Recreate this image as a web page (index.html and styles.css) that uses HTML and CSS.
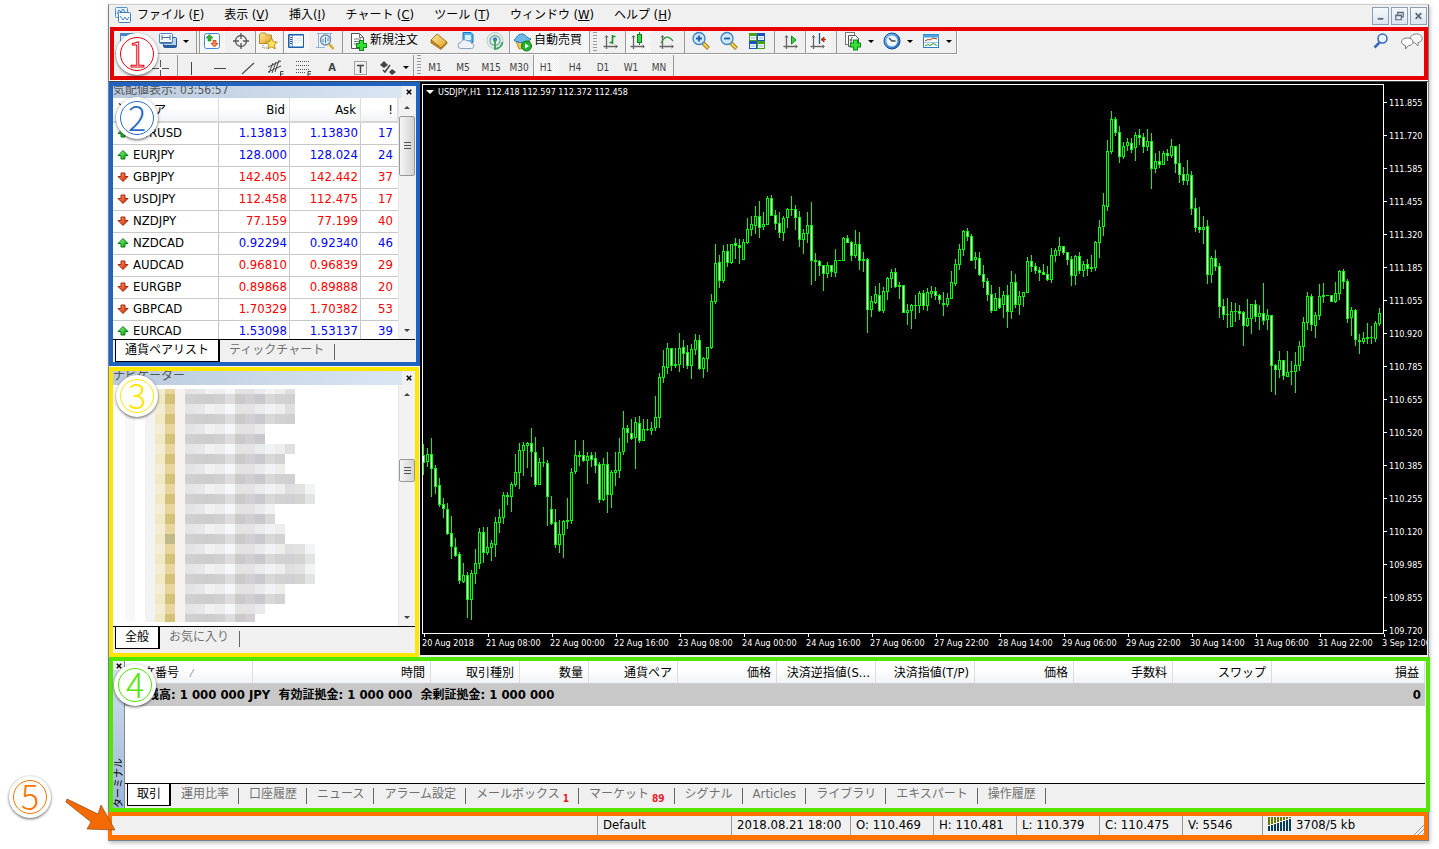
FILE: index.html
```html
<!DOCTYPE html>
<html lang="ja">
<head>
<meta charset="utf-8">
<title>USDJPY,H1</title>
<link rel="stylesheet" href="styles.css">
</head>
<body>
<svg class="defs" aria-hidden="true">
  <defs>
    <linearGradient id="gUp" x2="1" y2="1"><stop offset="0" stop-color="#8f8"/><stop offset="1" stop-color="#090"/></linearGradient>
    <linearGradient id="gDown" x2="1" y2="1"><stop offset="0" stop-color="#ff9a6a"/><stop offset="1" stop-color="#c81e00"/></linearGradient>
    <linearGradient id="gGold" x2="1" y2="1"><stop offset="0" stop-color="#ffe9a0"/><stop offset="1" stop-color="#e0a020"/></linearGradient>
    <linearGradient id="gBlue" x2="1" y2="1"><stop offset="0" stop-color="#8fc8ff"/><stop offset="1" stop-color="#1560b8"/></linearGradient>
  </defs>
  <symbol id="up" viewBox="0 0 12 12"><path d="M6 1.500 11 6.500H8V10H4V6.500H1z" fill="url(#gUp)" stroke="#0a7a14"/></symbol>
  <symbol id="down" viewBox="0 0 12 12"><path d="M6 10.500 11 5.500H8V2H4V5.500H1z" fill="url(#gDown)" stroke="#a02a10"/></symbol>
  <symbol id="app" viewBox="0 0 20 20"><rect x="2.500" y="2.500" width="12" height="10" rx="1" fill="#e6f1fc" stroke="#5a93cc"/><rect x="5.500" y="7.500" width="12" height="10" rx="1" fill="#fff" stroke="#3d7fc0"/><path d="M4 9l2-4 2 2 2-3 2 3M7 11l3 4 2-3 2 3 2-3" fill="none" stroke="#3d7fc0"/></symbol>
  <symbol id="newchart" viewBox="0 0 20 20"><rect x="1.500" y="2.500" width="14" height="11" fill="#eaf3fc" stroke="#4a86c5"/><path d="M2 4h13" stroke="#4a86c5" stroke-width="2"/><path d="M12 8v9M7.500 12.500h9" stroke="#18a818" stroke-width="3"/></symbol>
  <symbol id="profiles" viewBox="0 0 20 20"><rect x="5.500" y="6.500" width="13" height="10" rx="1" fill="#b9d5f2" stroke="#2a5c9c"/><path d="M6 15h12" stroke="#2a5c9c" stroke-width="2"/><rect x="1.500" y="2.500" width="13" height="10" rx="1" fill="#f2f8ff" stroke="#4a86c5"/><path d="M4 4v5M12 4v5M4 6.500h8M2 11.500h12" stroke="#4a6f94" fill="none"/></symbol>
  <symbol id="market" viewBox="0 0 20 20"><rect x="2.500" y="2.500" width="15" height="15" rx="2" fill="#fff" stroke="#3d8bd8"/><path d="M7.500 3.500 11 7H9v3H6V7H4z" fill="#2eb52e" stroke="#0b8213" stroke-width=".6"/><path d="M12.500 16 16 12.500h-2v-3h-3v3H9z" fill="#f28a5a" stroke="#c23a10" stroke-width=".8"/></symbol>
  <symbol id="cross" viewBox="0 0 20 20"><circle cx="10" cy="10" r="5.500" fill="none" stroke="#555" stroke-width="1.300"/><path d="M10 2v6M10 12v6M2 10h6M12 10h6" stroke="#555" stroke-width="1.300"/></symbol>
  <symbol id="navi" viewBox="0 0 20 20"><path d="M1.500 12.500v-9l2-1.500h4l1 2h5v8.500z" fill="url(#gGold)" stroke="#b98a1c"/><path d="M5 14v3h4" stroke="#777" stroke-dasharray="1 1" fill="none"/><path d="m13.500 7 1.800 3.700 4 .4-3 2.700.9 4-3.700-2-3.700 2 .9-4-3-2.700 4-.4z" fill="#ffe45c" stroke="#b98a1c"/></symbol>
  <symbol id="term" viewBox="0 0 20 20"><rect x="2" y="3" width="16" height="14" rx="1" fill="#1c5fae"/><rect x="3.500" y="4.500" width="3" height="11" fill="#dcebfb"/><rect x="7" y="4.500" width="10" height="11" fill="#fff"/><path d="M4 6.500h2" stroke="#d33"/><path d="M4 8.500h2M4 10.500h2M4 12.500h2" stroke="#456"/><path d="M8 7.500h8M8 9.500h8M8 11.500h8" stroke="#e0eaf5"/></symbol>
  <symbol id="tester" viewBox="0 0 20 20"><path d="M2 2.500h15M3.500 2v15M15.500 2v7M1 16.500h9" stroke="#8bb3dd" fill="none"/><circle cx="10.500" cy="9" r="5" fill="#dcecfa" stroke="#6888a8" stroke-width="1.300"/><path d="M8 11V8M10.500 12V6M13 10V7" stroke="#4a7cb5"/><path d="m14 13 4.500 5" stroke="#d8a828" stroke-width="2.500"/></symbol>
  <symbol id="order" viewBox="0 0 20 20"><path d="M2.500 1.500h8l4 4v11h-12z" fill="#fff" stroke="#555"/><path d="M10.500 1.500v4h4M5 7h7M5 9.500h7M5 12h5" stroke="#777" fill="none"/><path d="M12.500 8v11M7 13.500h11" stroke="#0a8a1a" stroke-width="5"/><path d="M12.500 9v9M8 13.500h9" stroke="#35e035" stroke-width="3"/></symbol>
  <symbol id="book" viewBox="0 0 20 20"><path d="m8 3 10 8-6 6L2 9z" fill="url(#gGold)" stroke="#a8741a"/><path d="M2 9v3l10 6.500 6-6V11l-6 6z" fill="#c98a1e" stroke="#8a5a10" stroke-width=".6"/></symbol>
  <symbol id="cloud" viewBox="0 0 20 20"><path d="M6 1.500h8l2 2v8H6z" fill="#49b2f2" stroke="#1c78bd"/><path d="M8 4h6v5H8z" fill="#d7f0ff"/><path d="M4 17.500a3 3 0 0 1 0-6c1-3 4-3.500 6-1.500 3-1 4 1 4.500 2.500 3 0 3 5 0 5z" fill="#eef3fa" stroke="#8aa2bd"/></symbol>
  <symbol id="signal" viewBox="0 0 20 20"><circle cx="10" cy="9.500" r="8" fill="#e6efee" stroke="#b5c9c4"/><circle cx="10" cy="9.500" r="5" fill="none" stroke="#7fb0a0" stroke-width="1.500"/><circle cx="10" cy="8.500" r="2.200" fill="#3b81c4"/><path d="M10 9v9c4-.5 7-3 7.500-7" fill="none" stroke="#3aa05c" stroke-width="1.800"/></symbol>
  <symbol id="auto" viewBox="0 0 20 20"><path d="M3 9h14l-3 7-8 1z" fill="#f3cb4c" stroke="#b88a18"/><path d="M1 8c3-2 3-6 8-6 4 0 4 4 9 5-3 4-13 5-17 1z" fill="#6fb9e8" stroke="#2878b5"/><circle cx="13.500" cy="14" r="5" fill="#22b52e" stroke="#0b7a17"/><path d="m12 11.500 4 2.500-4 2.500z" fill="#fff"/></symbol>
  <symbol id="axes" viewBox="0 0 20 20"><path d="M5.500 5v13M2.500 15.500H16" fill="none" stroke="#666" stroke-width="1.300"/><path d="M4 6.500 5.500 4.500 7 6.500M14.500 14l2 1.500-2 1.500" fill="none" stroke="#666"/></symbol>
  <symbol id="bars" viewBox="0 0 20 20"><use href="#axes"/><path d="M11.500 4v9M11.500 5.500h3M8.500 11.500h3" stroke="#18902a" stroke-width="1.600"/></symbol>
  <symbol id="candle" viewBox="0 0 20 20"><use href="#axes"/><path d="M11.500 1v13" stroke="#18902a"/><rect x="9.500" y="3.500" width="4" height="8" fill="#2bdc3b" stroke="#0f7d20"/></symbol>
  <symbol id="line" viewBox="0 0 20 20"><use href="#axes"/><path d="M4 12c4-7 7-8 12-2" stroke="#2b9a3a" stroke-width="1.300" fill="none"/></symbol>
  <symbol id="zin" viewBox="0 0 20 20"><path d="m12 12 5.500 5.500" stroke="#a8841c" stroke-width="4"/><path d="m12 12 5 5" stroke="#f2d057" stroke-width="2"/><circle cx="8" cy="7.500" r="6" fill="#cfe6fa" stroke="#3a82c4" stroke-width="1.300"/><path d="M8 4.500v6M5 7.500h6" stroke="#1c5ea8" stroke-width="1.800"/></symbol>
  <symbol id="zout" viewBox="0 0 20 20"><path d="m12 12 5.500 5.500" stroke="#a8841c" stroke-width="4"/><path d="m12 12 5 5" stroke="#f2d057" stroke-width="2"/><circle cx="8" cy="7.500" r="6" fill="#cfe6fa" stroke="#3a82c4" stroke-width="1.300"/><path d="M5 7.500h6" stroke="#1c5ea8" stroke-width="1.800"/></symbol>
  <symbol id="tile" viewBox="0 0 20 20"><path d="M2 2h8v8H2zM10 10h8v8h-8z" fill="#48a018"/><path d="M10 2h8v8h-8zM2 10h8v8H2z" fill="#1c52c0"/><path d="M3 5h6v4H3zM11 5h6v4h-6zM3 13h6v4H3zM11 13h6v4h-6z" fill="#eaf4ff"/><path d="M4 7h4M12 7h4M4 15h4M12 15h4" stroke="#9bc"/></symbol>
  <symbol id="scroll" viewBox="0 0 20 20"><use href="#axes"/><path d="m10.500 5 4.500 4-4.500 4z" fill="#3bd64b" stroke="#138022"/></symbol>
  <symbol id="shift" viewBox="0 0 20 20"><use href="#axes"/><path d="M11.500 2v11" stroke="#1c5ea8" stroke-width="1.400"/><path d="M18 8.500h-4M16 6l-3 2.500 3 2.500z" stroke="#b52c0c" fill="#d8481c"/></symbol>
  <symbol id="indi" viewBox="0 0 20 20"><rect x="2.500" y="1.500" width="9" height="12" fill="#fff" stroke="#777"/><path d="M5.500 4.500h7l3 3v8h-10z" fill="#fff" stroke="#555"/><path d="M10 6.500c-2-1-2 1-2 6M6.500 9h3" stroke="#555" fill="none"/><path d="M12.500 8.500v11M7 14h11" stroke="#0a8a1a" stroke-width="5"/><path d="M12.500 9.500v9M8 14h9" stroke="#35e035" stroke-width="3"/></symbol>
  <symbol id="clock" viewBox="0 0 20 20"><circle cx="10" cy="10" r="8" fill="url(#gBlue)" stroke="#0f4a95"/><circle cx="10" cy="10" r="5.500" fill="#eef6fd"/><path d="M7 7l3 3h3.500" stroke="#444" stroke-width="1.300" fill="none"/></symbol>
  <symbol id="templ" viewBox="0 0 20 20"><rect x="2.500" y="3.500" width="15" height="13" fill="#fff" stroke="#2f7fc8"/><path d="M2 5h16" stroke="#4aa0e0" stroke-width="3"/><path d="M3 11.500h14" stroke="#9cc4e4"/><path d="m4 10 3-1.500 2 .5 3-2 4 1" stroke="#a83a10" fill="none"/><path d="m4 15 3-1.500 2 1 3-2 4 2" stroke="#1a9a2a" fill="none"/></symbol>
  <symbol id="find" viewBox="0 0 20 20"><path d="m8.500 11.500-5 5" stroke="#3568c0" stroke-width="2.500"/><circle cx="11.500" cy="7.500" r="4.500" fill="#edf4fd" stroke="#3568c0" stroke-width="1.500"/></symbol>
  <symbol id="chat" viewBox="0 0 24 20"><path d="M15 3c9-1 9 8 3 8.500V15l-3-3c-6 0-7-8 0-9z" fill="#f5f5f5" stroke="#888"/><path d="M7.500 7c-8 0-7 7-2 7.500V18l3-3.500c6 0 6-7.500-1-7.500z" fill="#fff" stroke="#777"/></symbol>
  <symbol id="cursor" viewBox="0 0 20 20"><path d="M6 3v12l3-3 2 5 2-1-2-4h4z" fill="#555"/></symbol>
  <symbol id="plus" viewBox="0 0 20 20"><path d="M10.500 2v7M10.500 12v6M2 10.500h7M12 10.500h7" stroke="#555"/></symbol>
  <symbol id="vl" viewBox="0 0 20 20"><path d="M9.500 4v13" stroke="#444"/></symbol>
  <symbol id="hl" viewBox="0 0 20 20"><path d="M4 10.500h12" stroke="#444"/></symbol>
  <symbol id="tl" viewBox="0 0 20 20"><path d="M4 16 16 5" stroke="#555" stroke-width="1.300"/></symbol>
  <symbol id="chan" viewBox="0 0 20 20"><path d="M2 9 15 3M2 14 15 8M3 15l4-10M6 15l4-11M9 14l4-12" stroke="#444" fill="none"/><path d="M17.500 13.500h-3v5h3M14.500 16h3" stroke="#444" fill="none"/></symbol>
  <symbol id="fibo" viewBox="0 0 20 20"><path d="M2 3.500h14M2 7.500h14M2 11.500h14M2 14.500h10" stroke="#555" stroke-dasharray="1 1"/><path d="M17 13.500h-3V19M14 16h3" stroke="#444" fill="none"/></symbol>
  <symbol id="tbox" viewBox="0 0 20 20"><path d="M4.500 3.500h12v13h-12z" fill="none" stroke="#555" stroke-dasharray="1 1"/><path d="M7 7.500h7M10.500 7v8" stroke="#444" stroke-width="1.500"/></symbol>
  <symbol id="shapes" viewBox="0 0 20 20"><path d="m6 3 4 4-4 3-4-3zM14 11l4 3-4 3-3-3z" fill="#444"/><path d="m5 12 2 2 5-7" stroke="#444" stroke-width="1.500" fill="none"/></symbol>
</svg>

<div class="window">
  <nav class="menubar">
    <svg class="ico"><use href="#app"/></svg>
    <ul class="menus">
      <li><button>ファイル <span class="lat">(<u>F</u>)</span></button></li>
      <li><button>表示 <span class="lat">(<u>V</u>)</span></button></li>
      <li><button>挿入<span class="lat">(<u>I</u>)</span></button></li>
      <li><button>チャート <span class="lat">(<u>C</u>)</span></button></li>
      <li><button>ツール <span class="lat">(<u>T</u>)</span></button></li>
      <li><button>ウィンドウ <span class="lat">(<u>W</u>)</span></button></li>
      <li><button>ヘルプ <span class="lat">(<u>H</u>)</span></button></li>
    </ul>
    <div class="winbtns">
      <button aria-label="最小化"><svg viewBox="0 0 16 16"><path d="M5 11h6" stroke="#5c6c7c" stroke-width="2"/></svg></button>
      <button aria-label="元に戻す"><svg viewBox="0 0 16 16"><path d="M6 6V4h6v5h-2M4 7h6v5H4zM4 7.500h6M6 4.500h6" fill="none" stroke="#5c6c7c" stroke-width="1.300"/></svg></button>
      <button aria-label="閉じる"><svg viewBox="0 0 16 16"><path d="m5 5 6 6M11 5l-6 6" stroke="#5c6c7c" stroke-width="2"/></svg></button>
    </div>
  </nav>

  <section class="toolbars framed red">
    <div class="toolbar">
      <div class="band">
        <button class="tool dd" aria-label="新規チャート"><svg class="ico"><use href="#newchart"/></svg></button>
        <button class="tool dd" aria-label="プロファイル"><svg class="ico"><use href="#profiles"/></svg></button>
        <i class="sep"></i>
        <button class="tool on" aria-label="気配値表示"><svg class="ico"><use href="#market"/></svg></button>
        <button class="tool" aria-label="データウィンドウ"><svg class="ico"><use href="#cross"/></svg></button>
        <button class="tool on" aria-label="ナビゲーター"><svg class="ico"><use href="#navi"/></svg></button>
        <button class="tool on" aria-label="ターミナル"><svg class="ico"><use href="#term"/></svg></button>
        <button class="tool" aria-label="ストラテジーテスター"><svg class="ico"><use href="#tester"/></svg></button>
        <i class="sep"></i>
        <button class="tool wide"><svg class="ico"><use href="#order"/></svg><span>新規注文</span></button>
        <button class="tool" aria-label="メタエディター"><svg class="ico"><use href="#book"/></svg></button>
        <button class="tool" aria-label="クラウド"><svg class="ico"><use href="#cloud"/></svg></button>
        <button class="tool" aria-label="シグナル"><svg class="ico"><use href="#signal"/></svg></button>
        <button class="tool wide on"><svg class="ico"><use href="#auto"/></svg><span>自動売買</span></button>
        <i class="grip"></i>
        <button class="tool" aria-label="バーチャート"><svg class="ico"><use href="#bars"/></svg></button>
        <button class="tool on" aria-label="ローソク足"><svg class="ico"><use href="#candle"/></svg></button>
        <button class="tool" aria-label="ラインチャート"><svg class="ico"><use href="#line"/></svg></button>
        <i class="sep"></i>
        <button class="tool" aria-label="拡大"><svg class="ico"><use href="#zin"/></svg></button>
        <button class="tool" aria-label="縮小"><svg class="ico"><use href="#zout"/></svg></button>
        <button class="tool" aria-label="整列"><svg class="ico"><use href="#tile"/></svg></button>
        <i class="sep"></i>
        <button class="tool" aria-label="自動スクロール"><svg class="ico"><use href="#scroll"/></svg></button>
        <button class="tool on" aria-label="チャートシフト"><svg class="ico"><use href="#shift"/></svg></button>
        <i class="sep"></i>
        <button class="tool dd" aria-label="インディケータ"><svg class="ico"><use href="#indi"/></svg></button>
        <button class="tool dd" aria-label="時間足"><svg class="ico"><use href="#clock"/></svg></button>
        <button class="tool dd" aria-label="定型チャート"><svg class="ico"><use href="#templ"/></svg></button>
      </div>
      <span class="right">
        <button class="tool" aria-label="検索"><svg class="ico"><use href="#find"/></svg></button>
        <button class="tool" aria-label="チャット"><svg class="ico chat"><use href="#chat"/></svg></button>
      </span>
    </div>
    <div class="toolbar second">
      <button class="tool" aria-label="カーソル"><svg class="ico"><use href="#cursor"/></svg></button>
      <button class="tool" aria-label="十字カーソル"><svg class="ico"><use href="#plus"/></svg></button>
      <i class="sep"></i>
      <button class="tool" aria-label="垂直線"><svg class="ico"><use href="#vl"/></svg></button>
      <button class="tool" aria-label="水平線"><svg class="ico"><use href="#hl"/></svg></button>
      <button class="tool" aria-label="トレンドライン"><svg class="ico"><use href="#tl"/></svg></button>
      <button class="tool" aria-label="チャネル"><svg class="ico"><use href="#chan"/></svg></button>
      <button class="tool" aria-label="フィボナッチ"><svg class="ico"><use href="#fibo"/></svg></button>
      <button class="tool letter">A</button>
      <button class="tool" aria-label="ラベル"><svg class="ico"><use href="#tbox"/></svg></button>
      <button class="tool dd" aria-label="図形"><svg class="ico"><use href="#shapes"/></svg></button>
      <i class="grip"></i>
      <button class="tool tf">M1</button><button class="tool tf">M5</button><button class="tool tf">M15</button><button class="tool tf">M30</button><button class="tool tf on">H1</button><button class="tool tf">H4</button><button class="tool tf">D1</button><button class="tool tf">W1</button><button class="tool tf">MN</button>
      <i class="end"></i>
    </div>
    <b class="badge b1">1</b>
  </section>

  <main class="work">
    <div class="side">
      <section class="panel framed blue">
        <h2 class="caption"><span>気配値表示: 03:56:57</span><button aria-label="閉じる"><svg viewBox="0 0 8 8"><path d="m1 1 6 6M7 1 1 7" stroke="#000" stroke-width="2"/></svg></button></h2>
        <div class="body">
          <div class="list">
            <table class="quotes">
              <colgroup><col><col class="c2"><col class="c3"><col class="c4"></colgroup>
              <thead><tr><th>通貨ペア</th><th>Bid</th><th>Ask</th><th>!</th></tr></thead>
              <tbody id="quotes"></tbody>
            </table>
          </div>
          <div class="scroll"><i class="arr u"></i><i class="thumb tall"></i><i class="arr d"></i></div>
        </div>
        <div class="tabs"><button class="act">通貨ペアリスト</button><button>ティックチャート</button></div>
        <b class="badge b2">2</b>
      </section>
      <section class="panel framed yellow">
        <h2 class="caption"><span>ナビゲーター</span><button aria-label="閉じる"><svg viewBox="0 0 8 8"><path d="m1 1 6 6M7 1 1 7" stroke="#000" stroke-width="2"/></svg></button></h2>
        <div class="body">
          <div class="list"><svg id="mosaic" class="mosaic" viewBox="0 0 285 241" width="285" height="241" shape-rendering="crispEdges"></svg></div>
          <div class="scroll"><i class="arr u"></i><i class="thumb mid"></i><i class="arr d"></i></div>
        </div>
        <div class="tabs"><button class="act">全般</button><button>お気に入り</button></div>
        <b class="badge b3">3</b>
      </section>
    </div>
    <section class="chart">
      <div class="plot">
        <svg id="candles" viewBox="422 84 962 550" preserveAspectRatio="none" shape-rendering="crispEdges"></svg>
        <p class="title">USDJPY,H1&nbsp; 112.418 112.597 112.372 112.458</p>
      </div>
      <ol class="prices" id="prices"></ol>
      <ol class="times" id="times"></ol>
    </section>
  </main>

  <section class="terminal framed green">
    <div class="strip"><button aria-label="閉じる"><svg viewBox="0 0 8 8"><path d="m1 1 6 6M7 1 1 7" stroke="#000" stroke-width="2"/></svg></button><h2>ターミナル</h2></div>
    <div class="tmain">
      <table class="trades">
        <colgroup><col class="w127"><col class="w178"><col class="w89"><col class="w69"><col class="w89"><col class="w99"><col class="w99"><col class="w99"><col class="w99"><col class="w99"><col class="w99"><col></colgroup>
        <thead><tr><th class="first">注文番号<small>⁄</small></th><th>時間</th><th>取引種別</th><th>数量</th><th>通貨ペア</th><th>価格</th><th>決済逆指値<span class="lat">(S...</span></th><th>決済指値<span class="lat">(T/P)</span></th><th>価格</th><th>手数料</th><th>スワップ</th><th>損益</th></tr></thead>
        <tbody><tr><td colspan="11">残高<span class="lat">: 1 000 000 JPY&nbsp; </span>有効証拠金<span class="lat">: 1 000 000&nbsp; </span>余剰証拠金<span class="lat">: 1 000 000</span></td><td class="num"><span class="lat">0</span></td></tr></tbody>
      </table>
      <div class="tabs">
        <button class="act">取引</button><button>運用比率</button><button>口座履歴</button><button>ニュース</button><button>アラーム設定</button><button>メールボックス<sub>1</sub></button><button>マーケット<sub>89</sub></button><button>シグナル</button><button><span class="lat">Articles</span></button><button>ライブラリ</button><button>エキスパート</button><button>操作履歴</button>
      </div>
    </div>
    <b class="badge b4">4</b>
  </section>

  <footer class="status framed orange">
    <span class="s0"></span><span class="s1">Default</span><span class="s2">2018.08.21 18:00</span><span class="s3">O: 110.469</span><span class="s3">H: 110.481</span><span class="s3">L: 110.379</span><span class="s3">C: 110.475</span><span class="s4">V: 5546</span><span class="s5"><svg id="net" viewBox="0 0 24 14" width="24" height="14" shape-rendering="crispEdges"></svg>3708/5 kb</span>
    <svg class="size" viewBox="0 0 12 12"><path d="M1 12 12 1M5 12l7-7M9 12l3-3" stroke="#999"/></svg>
    <b class="badge b5">5</b>
    <svg class="arrow" viewBox="0 0 52 36"><path d="M2 1 33 16 36 7 50 32 22 31 26 24 1 4z" fill="#f56a00" stroke="#8a4a18" stroke-width=".7"/></svg>
  </footer>
</div>
<script src="app.js"></script>
</body>
</html>
```
FILE: styles.css
```css
* { box-sizing: border-box; }
body { margin: 0; padding: 4px 10px 8px 108px; background: #fff; color: #000; font-family: "DejaVu Sans Condensed", "Noto Sans CJK JP", sans-serif; font-size: 12px; line-height: 16px; }
button { font: inherit; color: inherit; background: none; border: 0; padding: 0; margin: 0; white-space: nowrap; }
h2, p, ul, ol { margin: 0; padding: 0; list-style: none; font-size: 12px; font-weight: normal; }
.lat { font-size: 13px; line-height: 14px; }
.defs { position: absolute; width: 0; height: 0; }
.ico { width: 20px; height: 20px; flex: none; display: block; }
.ico.chat { width: 24px; }

.window { border: 1px solid #76828e; border-top-color: #ccc; background: #f0f0f0; box-shadow: 1px 2px 4px #0004; }
.framed { position: relative; }
.framed::after { content: ""; position: absolute; inset: 0; border: 4px solid; pointer-events: none; z-index: 2; }
.red::after { border-color: #e60000; left: 1px; }
.blue::after { border-color: #1f62c0; }
.yellow::after { border-color: #ffe600; right: 1px; }
.green::after { border-color: #52e600; right: -2px; }
.orange::after { border-color: #ff7300; left: -1px; border-bottom-width: 5px; }

.badge { position: absolute; z-index: 4; width: 42px; height: 42px; border-radius: 50%; border: 3px solid #fff; background: #fff; box-shadow: 0 1px 3px #0009; font: 300 34px/33px "Noto Sans CJK JP", sans-serif; text-align: center; }
.badge::before { content: ""; position: absolute; inset: 1px; border: 1px solid; border-radius: 50%; }
.b1 { left: 7px; top: 6px; color: #fff; -webkit-text-stroke: 1px #e60012; }
.b1::before { border-color: #e60012; }
.b2 { left: 7px; top: 15px; color: #2b6cc4; }
.b3 { left: 7px; top: 8px; color: #ffe600; }
.b4 { left: 5px; top: 7px; color: #52e600; }
.b5 { left: -100px; top: -36px; color: #ff7300; }
.arrow { position: absolute; z-index: 4; left: -44px; top: -14px; width: 52px; height: 36px; }

.menubar { display: flex; align-items: center; height: 22px; padding: 0 0 2px 4px; }
.menus { display: flex; gap: 20px; margin-left: 4px; }
.winbtns { margin-left: auto; display: flex; gap: 2px; padding: 1px 1px 0 0; }
.winbtns button { width: 17px; height: 18px; border: 1px solid #8aa0b5; background: linear-gradient(#f4f8fc, #dbe6f1); }
.winbtns svg { display: block; width: 15px; height: 16px; }

.toolbars { height: 54px; border-bottom: 1px solid #fff; }
.toolbar { display: flex; align-items: stretch; height: 27px; padding-left: 6px; }
.band { display: flex; padding-top: 2px; border-right: 1px solid #999; border-bottom: 1px solid #999; box-shadow: 1px 1px #fff; }
.toolbar.second { padding: 1px 0 0 9px; height: 26px; }
.tool { width: 28px; display: flex; align-items: center; justify-content: center; flex: none; }
.tool.on { background: repeating-conic-gradient(#fff 0 25%, #eee 0 50%) 0 0 / 2px 2px content-box; box-shadow: inset 1px 0 #999; padding-right: 2px; }
.tool.dd { width: 39px; justify-content: flex-start; padding-left: 4px; gap: 5px; }
.tool.dd::after { content: ""; border: 3px solid transparent; border-top-color: #000; border-bottom: 0; }
.tool.wide { width: 80px; align-items: flex-start; justify-content: flex-start; padding-left: 4px; padding-top: 3px; gap: 1px; }
.tool.wide.on { background-clip: padding-box; }
.tool.letter { color: #444; font-weight: bold; font-size: 11px; }
.tool.tf { color: #444; font-size: 10px; }
.sep { width: 6px; flex: none; background: linear-gradient(#999, #999) 3px 0 / 1px 100% no-repeat; }
.second .sep { width: 4px; }
.grip { width: 8px; flex: none; border-left: 1px solid #999; background: repeating-linear-gradient(#999 0 1px, #f0f0f0 1px 3px) 3px 0 / 4px 100% no-repeat; }
.end { border-left: 1px solid #999; flex: none; }
.right { margin-left: auto; display: flex; padding: 1px 2px 0 0; gap: 3px; }

.work { display: flex; border-top: 1px solid #444; }
.side { width: 311px; flex: none; display: flex; flex-direction: column; gap: 1px; }
.panel { padding: 3px 5px 4px 4px; background: #f0f0f0; }
.yellow { padding-bottom: 8px; padding-top: 4px; }
.caption { display: flex; align-items: center; justify-content: space-between; height: 13px; overflow: hidden; background: linear-gradient(90deg, #b9cade, #dce7f3); color: #555; }
.yellow .caption { height: 14px; }
.caption span { height: 20px; line-height: 16px; }
.caption button { align-self: stretch; width: 13px; background: #f0f0f0; }
.caption svg, .strip svg { width: 6px; height: 6px; display: block; margin: auto; }
.body { display: flex; height: 241px; background: #fff; }
.list { flex: 1; overflow: hidden; }
.quotes { width: 100%; border-collapse: separate; border-spacing: 0; table-layout: fixed; font-size: 13px; }
.quotes .c2, .quotes .c3 { width: 71px; }
.quotes .c4 { width: 37px; }
.quotes th { height: 25px; font-weight: normal; text-align: right; padding: 0 4px; border-right: 1px solid #ddd; border-bottom: 2px solid #d5d5d5; background: linear-gradient(#fff 40%, #f1f3f6); }
.quotes th:first-child, .quotes td:first-child { text-align: left; }
.quotes th:first-child { padding-left: 5px; font-size: 12px; }
.quotes td { height: 22px; padding: 0 2px 2px; text-align: right; border-right: 1px solid #c8c8c8; border-bottom: 1px solid #c8c8c8; color: #f00; }
.quotes td:last-child { padding-right: 5px; border-right: 0; }
.quotes .rise td { color: #00f; }
.quotes td:first-child, .quotes .rise td:first-child { color: #000; padding-left: 4px; }
.quotes td svg { width: 12px; height: 12px; margin-right: 4px; vertical-align: -2px; }
.scroll { width: 17px; flex: none; background: #f2f2f2; border-left: 1px solid #e6e6e6; display: flex; flex-direction: column; }
.arr { height: 18px; display: flex; align-items: center; justify-content: center; }
.arr::before { content: ""; border: 3px solid transparent; }
.arr.u::before { border-bottom-color: #444; border-top: 0; }
.arr.d::before { border-top-color: #444; border-bottom: 0; }
.arr.d { margin-top: auto; }
.thumb { border: 1px solid #999; border-radius: 2px; background: repeating-linear-gradient(#555 0 1px, transparent 1px 3px) 50% 50% / 7px 8px no-repeat, linear-gradient(90deg, #f6f6f6, #d2d2d6); }
.tall { height: 60px; }
.mid { height: 23px; margin-top: 56px; }
.mosaic { display: block; }
.tabs { display: flex; align-items: flex-start; height: 23px; padding-left: 2px; border-top: 1px solid #000; background: #f0f0f0; color: #707070; }
.tabs button { height: 21px; padding: 0 11px 1px 9px; position: relative; }
.tabs button::after { content: ""; position: absolute; right: 0; top: 4px; height: 16px; border-right: 1px solid #666; }
.tabs .act { background: #fff; border: 1px solid #000; border-top: 0; border-right-width: 2px; color: #000; height: 22px; padding: 0 9px 1px; }
.tabs .act::after { content: none; }
.tabs sub { color: #e8202a; font-weight: bold; font-size: 10px; line-height: 0; vertical-align: -4px; margin-left: 3px; }

.chart { flex: 1; min-width: 0; display: grid; grid-template-columns: 1fr 43px; grid-template-rows: auto 1fr; padding: 2px 0 0 2px; background: #000; color: #fff; border-bottom: 2px solid #eee; border-right: 1px solid #eee; overflow: hidden; }
.plot { grid-area: 1 / 1; position: relative; }
.plot svg { display: block; width: 100%; height: auto; }
.title { position: absolute; left: 4px; top: 0; font-size: 9px; display: flex; align-items: center; gap: 4px; }
.title::before { content: ""; border: 4px solid transparent; border-top-color: #fff; border-bottom: 0; }
.prices { grid-area: 1 / 2 / 3 / 3; font-size: 9px; padding-top: 2px; }
.prices li { height: 33px; display: flex; align-items: center; gap: 2px; }
.prices li::before { content: ""; width: 3px; border-top: 1px solid #fff; }
.times { grid-area: 2 / 1 / 3 / 3; font-size: 9px; display: flex; height: 21px; overflow: hidden; }
.times li { width: 64px; flex: none; white-space: nowrap; line-height: 12px; }
.times li::before { content: ""; display: block; height: 3px; width: 2px; border-right: 1px solid #fff; }

.terminal { display: flex; padding: 4px 3px 4px 4px; background: #f0f0f0; }
.strip { width: 12px; flex: none; display: flex; flex-direction: column; border-right: 1px solid #888; background: linear-gradient(#d5e1f0, #9cb6d8); }
.strip button { height: 9px; background: #f0f0f0; }
.strip h2 { margin-top: auto; writing-mode: vertical-rl; text-orientation: sideways; transform: rotate(180deg); font-size: 10px; line-height: 11px; white-space: nowrap; }
.tmain { flex: 1; min-width: 0; background: #fff; display: flex; flex-direction: column; height: 147px; }
.trades { width: 100%; table-layout: fixed; border-spacing: 0; }
.w127 { width: 128px; } .w178 { width: 178px; } .w89 { width: 89px; } .w69 { width: 69px; } .w99 { width: 99px; }
.trades th { height: 23px; padding: 1px 5px 0; text-align: right; font-weight: normal; white-space: nowrap; border-right: 1px solid #ddd; border-bottom: 1px solid #ccc; background: linear-gradient(#fff 40%, #f1f3f6); }
.trades .first { text-align: left; padding-left: 6px; }
.trades small { margin-left: 12px; color: #777; font-size: 10px; line-height: 10px; }
.trades td { height: 22px; padding: 0 4px 0 22px; background: #c8c8c8; font-weight: bold; }
.trades .num { text-align: right; }
.tmain .tabs { margin-top: auto; height: 25px; }
.tmain .tabs button { padding: 0 10px 1px; }
.tmain .tabs .act { padding: 0 8px 1px 9px; }

.status { display: flex; height: 28px; padding: 4px; font-size: 13px; background: #f0f0f0; }
.status span { padding: 0 0 0 5px; border-left: 1px solid #999; white-space: nowrap; line-height: 17px; }
.status .s0 { flex: 1; border: 0; }
.s1 { width: 134px; } .s2 { width: 119px; } .s3 { width: 83px; } .s4 { width: 80px; } .s5 { width: 150px; }
.s5 svg { vertical-align: -2px; margin-right: 4px; }
.size { width: 12px; height: 12px; align-self: flex-end; flex: none; }
```
FILE: app.js
```js
const NS = "http://www.w3.org/2000/svg";
function rect(parent, x, y, w, h, fill) {
  const r = document.createElementNS(NS, "rect");
  r.setAttribute("x", x); r.setAttribute("y", y);
  r.setAttribute("width", w); r.setAttribute("height", h);
  r.setAttribute("fill", fill);
  parent.appendChild(r);
}

// high, body top, body bottom, low, u = rising / d = falling
const candles = `444,455,463,475,d 448,454,462,467,u 438,454,469,497,d 465,468,487,494,d 478,485,505,507,d 498,504,509,518,d 503,509,534,535,d 516,533,547,559,d 538,547,556,557,d 552,554,581,584,d
563,575,582,583,u 572,575,600,618,d 570,573,600,620,u 549,563,574,584,u 528,532,564,569,u 527,532,553,563,d 527,547,553,555,u 540,543,548,561,u 517,522,545,557,u 509,517,523,533,u
492,495,518,524,u 492,495,497,505,d 482,484,497,512,u 454,472,485,487,u 443,450,473,489,u 442,445,451,476,u 442,443,446,468,u 428,443,452,477,d 437,452,485,487,d 458,462,485,485,u
447,462,463,467,d 460,463,497,526,d 496,509,524,525,d 509,522,545,548,d 520,534,545,553,u 520,521,535,558,u 498,520,522,529,u 468,472,521,524,u 440,455,472,474,u 451,455,457,466,d
440,455,461,462,d 452,456,461,484,u 452,455,460,467,d 452,458,466,473,d 462,464,500,503,d 458,464,500,501,u 452,464,495,513,d 470,472,495,508,u 452,470,473,486,u 438,452,471,478,u
411,428,452,455,u 425,428,433,443,d 419,433,439,440,d 417,422,438,469,u 416,423,441,443,d 419,429,441,441,u 419,429,430,431,d 422,428,431,435,u 396,417,428,431,u 373,377,418,428,u
350,366,378,383,u 343,348,368,374,u 348,348,366,371,d 348,364,366,368,d 333,348,365,372,u 340,347,354,368,d 345,352,366,369,d 344,349,366,379,u 334,340,350,355,u 335,340,369,370,d
357,358,369,378,u 347,347,359,372,u 294,301,348,349,u 244,263,302,304,u 255,262,281,288,d 245,251,281,283,u 244,251,263,267,d 244,244,263,264,u 238,243,246,259,d 239,245,248,264,d
239,242,260,260,u 218,229,243,244,u 216,224,230,236,u 206,216,226,234,u 201,216,228,238,d 212,224,227,230,u 196,198,225,225,u 195,198,216,216,d 210,215,224,230,d 212,223,233,238,d
216,218,233,241,u 208,209,218,228,u 196,209,210,216,d 205,209,218,230,d 211,217,240,247,d 229,233,240,254,u 212,225,234,243,u 202,225,261,285,d 253,260,262,281,d 260,261,266,276,d
265,265,274,291,d 262,265,274,278,u 265,265,272,277,d 249,260,273,277,u 260,260,261,261,u 237,238,261,261,u 235,238,243,243,d 241,242,256,261,d 230,244,256,258,u 232,244,261,270,d
252,259,261,272,d 258,259,310,333,d 296,301,310,317,u 286,294,303,304,u 283,295,311,312,d 287,291,311,313,u 277,278,292,300,u 269,272,279,288,u 268,272,287,288,d 282,285,287,299,d
285,285,313,313,d 304,310,313,325,u 304,305,311,329,u 295,305,306,319,u 291,293,306,313,u 290,293,306,310,d 288,292,306,311,u 286,291,294,298,u 287,291,296,300,d 294,295,300,304,d
292,303,305,316,d 293,298,305,307,u 271,282,299,299,u 259,264,284,286,u 244,249,265,270,u 230,231,250,256,u 228,231,237,241,d 234,236,261,261,d 252,257,260,269,u 252,258,275,276,d
265,274,282,288,d 278,281,295,301,d 285,294,311,313,d 293,298,311,311,u 287,298,308,309,d 291,295,305,318,u 285,295,312,328,d 271,282,312,319,u 274,282,305,308,d 291,296,305,315,u
292,292,297,307,u 257,261,293,293,u 255,261,267,272,d 263,266,271,274,d 267,270,273,281,d 264,272,275,275,d 266,274,280,281,d 248,255,280,283,u 248,250,256,262,u 237,246,251,256,u
246,246,253,255,d 252,252,260,265,d 256,259,276,286,d 255,256,276,285,u 252,256,271,274,d 261,264,271,277,u 259,264,269,276,d 255,267,269,272,d 241,242,268,271,u 220,227,243,258,u
193,205,227,236,u 140,151,207,211,u 111,119,152,154,u 117,119,133,136,d 126,132,157,163,d 142,146,157,159,u 138,142,146,151,u 138,143,150,153,d 132,135,148,161,u 129,135,138,145,d
133,137,147,153,d 129,141,147,151,u 133,141,169,189,d 153,161,169,173,u 151,161,165,168,d 151,153,165,165,u 149,153,156,161,d 139,146,156,158,u 146,146,164,173,d 144,163,175,183,d
167,174,181,185,d 160,174,181,185,u 171,175,209,215,d 198,208,228,232,d 207,227,230,233,d 216,227,230,244,u 220,226,275,284,d 256,258,275,283,u 250,258,267,271,d 263,266,307,318,d
299,306,315,320,d 298,314,315,328,u 302,311,327,327,u 303,311,312,322,u 305,311,314,320,d 311,312,326,346,d 299,318,326,327,u 304,304,319,334,u 300,304,317,322,d 305,313,317,330,u
283,313,321,325,d 309,315,320,330,u 315,315,366,392,d 364,365,370,395,d 351,360,370,378,u 360,360,376,380,d 351,372,377,377,u 361,371,372,385,u 352,365,372,393,u 341,346,366,371,u
317,322,347,361,u 292,296,323,330,u 294,296,325,331,d 312,315,326,338,u 284,296,316,320,u 283,295,297,303,d 295,295,296,296,u 295,295,302,302,d 282,293,302,303,u 270,271,294,300,u
269,271,282,289,d 279,281,319,323,d 307,310,318,336,u 309,310,340,346,d 334,340,342,354,d 332,338,342,344,u 323,337,339,344,u 326,337,338,344,u 321,323,339,342,u 308,313,324,326,u`.split(/\s+/);

const plot = document.getElementById("candles");
candles.forEach((c, i) => {
  const [h, t, b, l, dir] = c.split(",");
  const x = 423 + i * 4;
  rect(plot, x, +h, 1, l - h, "#0f0");
  rect(plot, x - 1, +t, 3, b - t, "#0f0");
  if (b - t > 2) rect(plot, x, +t + 1, 1, b - t - 2, dir === "u" ? "#000" : "#fff");
});
rect(plot, 422, 84, 962, 1, "#fff");
rect(plot, 422, 633, 962, 1, "#fff");
rect(plot, 422, 84, 1, 550, "#fff");
rect(plot, 1383, 84, 1, 550, "#fff");

function fill(id, items) {
  document.getElementById(id).innerHTML = items.map(s => `<li>${s}</li>`).join("");
}
fill("prices", ["111.855", "111.720", "111.585", "111.455", "111.320", "111.185", "111.055", "110.920", "110.785", "110.655", "110.520", "110.385", "110.255", "110.120", "109.985", "109.855", "109.720"]);
fill("times", ["20 Aug 2018", "21 Aug 08:00", "22 Aug 00:00", "22 Aug 16:00", "23 Aug 08:00", "24 Aug 00:00", "24 Aug 16:00", "27 Aug 06:00", "27 Aug 22:00", "28 Aug 14:00", "29 Aug 06:00", "29 Aug 22:00", "30 Aug 14:00", "31 Aug 06:00", "31 Aug 22:00", "3 Sep 12:00"]);

const quotes = [
  ["EURUSD", "1.13813", "1.13830", 17, 1], ["EURJPY", "128.000", "128.024", 24, 1],
  ["GBPJPY", "142.405", "142.442", 37, 0], ["USDJPY", "112.458", "112.475", 17, 0],
  ["NZDJPY", "77.159", "77.199", 40, 0], ["NZDCAD", "0.92294", "0.92340", 46, 1],
  ["AUDCAD", "0.96810", "0.96839", 29, 0], ["EURGBP", "0.89868", "0.89888", 20, 0],
  ["GBPCAD", "1.70329", "1.70382", 53, 0], ["EURCAD", "1.53098", "1.53137", 39, 1]
];
document.getElementById("quotes").innerHTML = quotes.map(([n, b, a, s, up]) =>
  `<tr class="${up ? "rise" : "fall"}"><td><svg><use href="#${up ? "up" : "down"}"/></svg>${n}</td><td>${b}</td><td>${a}</td><td>${s}</td></tr>`).join("");

// Pixelated account tree: number of 10px cells in each row, light and dark rows alternate
const mosaic = document.getElementById("mosaic");
const cells = [11, 11, 11, 11, 8, 8, 11, 10, 10, 11, 13, 13, 9, 9, 10, 10, 13, 13, 13, 13, 10, 10, 8, 7];
const light = ["#e4e4e6", "#e7e7e9", "#f1f1f1", "#ededee", "#f4f6f9", "#e3e3e1", "#e6e2e3", "#e9eaec", "#f0f2f5", "#ededec", "#dfdfe0", "#e2e2e1", "#f1f4f5"];
const dark = ["#d0d0d0", "#cecece", "#cdcdcd", "#d0d0d0", "#dddddd", "#cbcac9", "#d3ced3", "#cac9d0", "#d9d8d6", "#d2d2d5", "#d0d0d2", "#d6d4d2", "#e2e4e4"];
cells.forEach((n, i) => {
  const y = i === 0 ? 4 : i * 10 - 1;
  const h = i === 0 ? 5 : i === 23 ? 8 : 10;
  const isDark = i % 2 === 1;
  rect(mosaic, 12, y, 10, h, "#f8f8f8");
  rect(mosaic, 32, y, 10, h, "#f3f3f3");
  rect(mosaic, 42, y, 10, h, isDark ? "#f0e9c6" : "#f4edd5");
  rect(mosaic, 52, y, 10, h, i === 15 ? "#c2b98a" : isDark ? "#d5c27a" : "#e8d59d");
  rect(mosaic, 62, y, 10, h, "#f7f1f0");
  const pal = isDark ? dark : light;
  for (let k = 0; k < n; k++) rect(mosaic, 72 + k * 10, y, 10, h, pal[k]);
});

// Connection meter
const net = document.getElementById("net");
for (let i = 0; i < 8; i++) {
  rect(net, i * 3, 0, 2, 8 - i, "#667a00");
  rect(net, i * 3, 9 - i, 2, 5 + i, "#0b3c5c");
}
```
